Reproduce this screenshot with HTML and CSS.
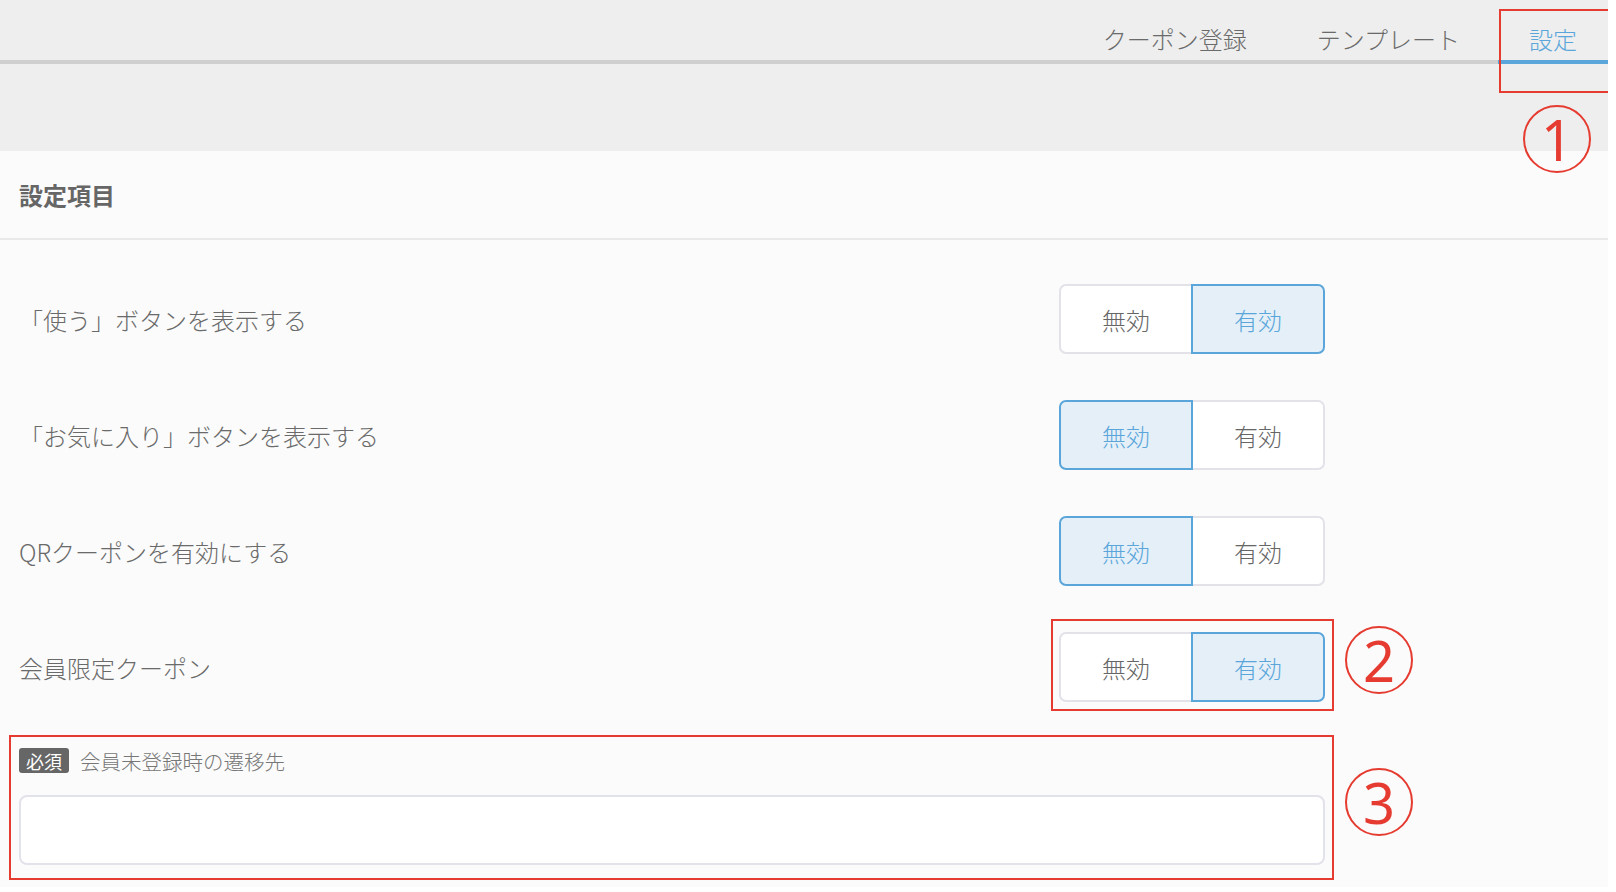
FILE: index.html
```html
<!DOCTYPE html>
<html lang="ja">

<head>
    <meta charset="UTF-8">
    <meta name="viewport" content="width=device-width, initial-scale=1.0">
    <title>設定</title>
    <link rel="stylesheet" href="styles.css">
</head>

<body>
    <div class="page">
        <header class="top">
            <nav class="tabs">
                <a class="tab">クーポン登録</a>
                <a class="tab">テンプレート</a>
                <a class="tab active">設定</a>
            </nav>
        </header>

        <section class="settings">
            <h2 class="settings-title">設定項目</h2>
            <div class="settings-body">
                <div class="row">
                    <span class="row-label">「使う」ボタンを表示する</span>
                    <div class="toggle">
                        <button class="seg">無効</button>
                        <button class="seg on">有効</button>
                    </div>
                </div>
                <div class="row">
                    <span class="row-label">「お気に入り」ボタンを表示する</span>
                    <div class="toggle">
                        <button class="seg on">無効</button>
                        <button class="seg">有効</button>
                    </div>
                </div>
                <div class="row">
                    <span class="row-label">QRクーポンを有効にする</span>
                    <div class="toggle">
                        <button class="seg on">無効</button>
                        <button class="seg">有効</button>
                    </div>
                </div>
                <div class="row">
                    <span class="row-label">会員限定クーポン</span>
                    <div class="toggle">
                        <button class="seg">無効</button>
                        <button class="seg on">有効</button>
                    </div>
                </div>
                <div class="field">
                    <div class="field-label"><span class="badge">必須</span>会員未登録時の遷移先</div>
                    <input class="field-input" type="text">
                </div>
            </div>
        </section>

        <!-- 注釈 -->
        <div class="mark mark-1"></div>
        <div class="mark mark-2"></div>
        <div class="mark mark-3"></div>
        <div class="num num-1">1</div>
        <div class="num num-2">2</div>
        <div class="num num-3">3</div>
    </div>
</body>

</html>
```

FILE: styles.css
```css
* {
    margin: 0;
    padding: 0;
    box-sizing: border-box;
}

body {
    background: #fff;
    font-family: "Noto Sans CJK JP", "Noto Sans", sans-serif;
    font-weight: 300;
    color: #666;
}

.page {
    width: 1608px;
    height: 887px;
    background: #fbfbfb;
    position: relative;
    overflow: hidden;
}

/* ヘッダー */
.top {
    height: 151px;
    background: #eeeeee;
}

.tabs {
    display: flex;
    justify-content: flex-end;
    gap: 6px;
    border-bottom: 4px solid #cfcfcf;
}

.tab {
    display: flex;
    align-items: center;
    height: 64px;
    padding: 16px 32px 0;
    margin-bottom: -4px;
    border-bottom: 4px solid transparent;
    font-size: 24px;
    color: #6a6a6a;
    cursor: pointer;
}

.tab.active {
    padding: 16px 31px 0;
    color: #5aa6da;
    border-bottom-color: #5aa6da;
}

/* 設定項目 */
.settings-title {
    height: 89px;
    padding: 0 19px;
    display: flex;
    align-items: center;
    font-size: 24px;
    font-weight: bold;
    color: #666;
    border-bottom: 2px solid #e9e9e9;
}

.settings-body {
    width: 1325px;
    padding: 44px 0 0 19px;
    display: flex;
    flex-direction: column;
    gap: 46px;
}

.row {
    display: flex;
    align-items: center;
    justify-content: space-between;
    height: 70px;
}

.row-label {
    font-size: 24px;
    color: #6a6a6a;
}

.toggle {
    display: flex;
}

.seg {
    width: 134px;
    height: 70px;
    border: 2px solid #e2e2e8;
    background: #fff;
    font-family: inherit;
    font-weight: 300;
    font-size: 24px;
    color: #666;
    cursor: pointer;
}

.seg + .seg {
    margin-left: -2px;
}

.seg:first-child {
    border-radius: 7px 0 0 7px;
}

.seg:last-child {
    border-radius: 0 7px 7px 0;
}

.seg.on {
    position: relative;
    z-index: 1;
    border-color: #5aa6da;
    background: #e4eff8;
    color: #5aa6da;
}

.field {
    display: flex;
    flex-direction: column;
    gap: 22px;
}

.field-label {
    display: flex;
    align-items: center;
    gap: 11px;
    font-size: 20.5px;
    color: #777;
    height: 25px;
}

.badge {
    display: inline-flex;
    align-items: center;
    justify-content: center;
    width: 50px;
    height: 25px;
    border-radius: 3px;
    background: #666;
    color: #fff;
    font-size: 18px;
    font-weight: normal;
}

.field-input {
    height: 70px;
    border: 2px solid #e2e2ea;
    border-radius: 8px;
    background: #fff;
}

/* 注釈（赤枠・番号） */
.mark {
    position: absolute;
    border: 2px solid #e53b30;
}

.mark-1 {
    left: 1499px;
    top: 9px;
    width: 111px;
    height: 84px;
}

.mark-2 {
    left: 1051px;
    top: 619px;
    width: 283px;
    height: 92px;
}

.mark-3 {
    left: 9px;
    top: 735px;
    width: 1325px;
    height: 145px;
}

.num {
    position: absolute;
    width: 68px;
    height: 68px;
    border: 2px solid #e53b30;
    border-radius: 50%;
    display: flex;
    align-items: center;
    justify-content: center;
    font-family: "Noto Sans", sans-serif;
    font-weight: normal;
    font-size: 56px;
    line-height: 1;
    color: #e53b30;
}

.num-1 {
    left: 1523px;
    top: 105px;
}

.num-2 {
    left: 1345px;
    top: 626px;
}

.num-3 {
    left: 1345px;
    top: 768px;
}
```
